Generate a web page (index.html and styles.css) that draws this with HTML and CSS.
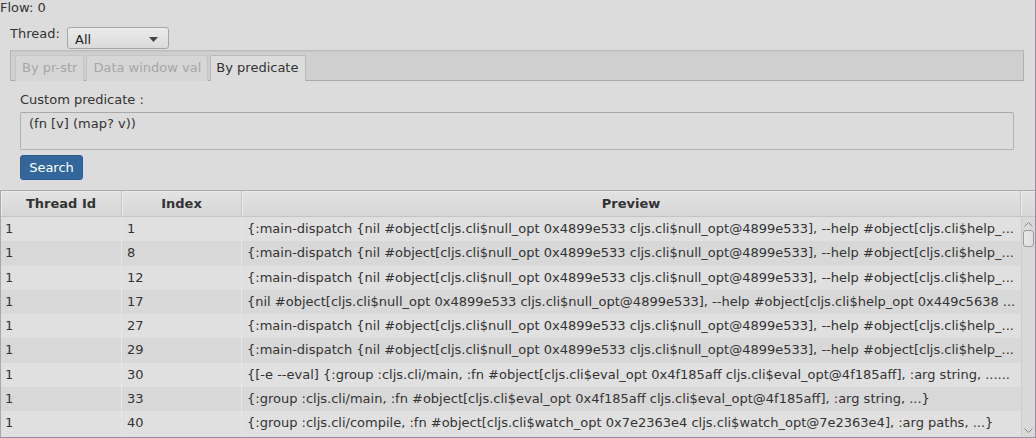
FILE: index.html
```html
<!DOCTYPE html>
<html>
<head>
<meta charset="utf-8">
<link rel="stylesheet" href="styles.css">
</head>
<body>
<div class="window">
  <div class="flow">Flow: 0</div>
  <div class="thread-row">
    <span class="thread-label">Thread:</span>
    <div class="combo">
      <span>All</span>
      <svg class="combo-arrow" width="9" height="5" viewBox="0 0 9 5"><path d="M0 0 H9 L4.5 5 Z" fill="#444"/></svg>
    </div>
  </div>
  <div class="tab-panel">
    <div class="tab-strip">
      <div class="tab">By pr-str</div>
      <div class="tab">Data window val</div>
      <div class="tab selected">By predicate</div>
    </div>
    <div class="tab-content">
      <div class="pred-label">Custom predicate :</div>
      <div class="textarea">(fn [v] (map? v))</div>
      <button class="search">Search</button>
    </div>
  </div>
  <div class="table">
    <div class="thead">
      <div class="th c1">Thread Id</div>
      <div class="th c2">Index</div>
      <div class="th c3">Preview</div>
      <div class="th corner"></div>
    </div>
    <div class="tbody">
      <div class="rows">
        <div class="row"><div class="td c1">1</div><div class="td c2">1</div><div class="td c3">{:main-dispatch {nil #object[cljs.cli$null_opt 0x4899e533 cljs.cli$null_opt@4899e533], --help #object[cljs.cli$help_...</div></div>
        <div class="row"><div class="td c1">1</div><div class="td c2">8</div><div class="td c3">{:main-dispatch {nil #object[cljs.cli$null_opt 0x4899e533 cljs.cli$null_opt@4899e533], --help #object[cljs.cli$help_...</div></div>
        <div class="row"><div class="td c1">1</div><div class="td c2">12</div><div class="td c3">{:main-dispatch {nil #object[cljs.cli$null_opt 0x4899e533 cljs.cli$null_opt@4899e533], --help #object[cljs.cli$help_...</div></div>
        <div class="row"><div class="td c1">1</div><div class="td c2">17</div><div class="td c3">{nil #object[cljs.cli$null_opt 0x4899e533 cljs.cli$null_opt@4899e533], --help #object[cljs.cli$help_opt 0x449c5638 ...</div></div>
        <div class="row"><div class="td c1">1</div><div class="td c2">27</div><div class="td c3">{:main-dispatch {nil #object[cljs.cli$null_opt 0x4899e533 cljs.cli$null_opt@4899e533], --help #object[cljs.cli$help_...</div></div>
        <div class="row"><div class="td c1">1</div><div class="td c2">29</div><div class="td c3">{:main-dispatch {nil #object[cljs.cli$null_opt 0x4899e533 cljs.cli$null_opt@4899e533], --help #object[cljs.cli$help_...</div></div>
        <div class="row"><div class="td c1">1</div><div class="td c2">30</div><div class="td c3">{[-e --eval] {:group :cljs.cli/main, :fn #object[cljs.cli$eval_opt 0x4f185aff cljs.cli$eval_opt@4f185aff], :arg string, ......</div></div>
        <div class="row"><div class="td c1">1</div><div class="td c2">33</div><div class="td c3">{:group :cljs.cli/main, :fn #object[cljs.cli$eval_opt 0x4f185aff cljs.cli$eval_opt@4f185aff], :arg string, ...}</div></div>
        <div class="row"><div class="td c1">1</div><div class="td c2">40</div><div class="td c3">{:group :cljs.cli/compile, :fn #object[cljs.cli$watch_opt 0x7e2363e4 cljs.cli$watch_opt@7e2363e4], :arg paths, ...}</div></div>
      </div>
      <div class="scrollbar">
        <svg class="sb-arrow" width="9" height="6" viewBox="0 0 9 6"><path d="M0.5 5.5 L4.5 1.5 L8.5 5.5" fill="none" stroke="#8a8a8a" stroke-width="1"/></svg>
        <div class="thumb"></div>
        <div class="sb-fill"></div>
        <svg class="sb-arrow" width="9" height="6" viewBox="0 0 9 6"><path d="M0.5 0.5 L4.5 4.5 L8.5 0.5" fill="none" stroke="#8a8a8a" stroke-width="1"/></svg>
      </div>
    </div>
  </div>
</div>
</body>
</html>
```
FILE: styles.css
```css
* { box-sizing: border-box; }
html, body { margin: 0; padding: 0; }
body {
  background: #dcdcdc;
  font-family: "DejaVu Sans", sans-serif;
  font-size: 13px;
  color: #333333;
  overflow: hidden;
}
.window {
  width: 1036px;
  height: 438px;
  border-right: 1px solid #9d8aa6;
  border-bottom: 1px solid #9d8aa6;
  display: flex;
  flex-direction: column;
  overflow: hidden;
}
.flow {
  line-height: 16px;
  height: 16px;
}
.thread-row {
  display: flex;
  align-items: flex-start;
  margin-top: 11px;
  padding-left: 10px;
  height: 23px;
}
.thread-label {
  line-height: 16px;
  margin-top: -1px;
  width: 57px;
}
.combo {
  width: 102px;
  height: 22px;
  border: 1px solid #a6a6a6;
  border-radius: 3px;
  background: linear-gradient(#ebebeb, #dadada);
  display: flex;
  align-items: center;
  justify-content: space-between;
  padding: 2px 10px 0 7px;
  color: #222;
}
.combo-arrow { margin-top: 0; }
.tab-panel {
  margin: 0 11px 0 10px;
}
.tab-strip {
  height: 31px;
  background: #cfcfcf;
  border: 1px solid #b3b3b3;
  border-top-color: #bcbcbc;
  border-bottom: 1px solid #a9a9a9;
  display: flex;
  align-items: flex-end;
  gap: 2px;
  padding-left: 4px;
  box-shadow: inset 0 1px 0 #c6c6c6;
}
.tab {
  height: 26px;
  margin-bottom: -1px;
  border: 1px solid #c4c4c4;
  border-bottom: none;
  border-radius: 2px 2px 0 0;
  background: #d6d6d6;
  color: #a6a6a6;
  padding: 4px 6px 0 6px;
  line-height: 16px;
  white-space: nowrap;
}
.tab.selected {
  background: #dcdcdc;
  color: #333333;
  border-color: #b9b9b9;
  padding: 4px 7px 0 5px;
}
.tab-content {
  padding: 11px 10px 0 10px;
}
.pred-label {
  line-height: 16px;
  height: 16px;
}
.textarea {
  margin-top: 4px;
  height: 38px;
  border: 1px solid #b2b2b2;
  border-top-color: #a8a8a8;
  border-radius: 2px;
  background: #dcdcdc;
  padding: 3px 8px;
  line-height: 16px;
  color: #333;
}
.search {
  display: block;
  margin-top: 5px;
  width: 63px;
  height: 25px;
  border: 1px solid #2d5d8f;
  border-radius: 3px;
  background: #33679b;
  color: #ffffff;
  font-family: "DejaVu Sans", sans-serif;
  font-size: 13px;
  padding: 0;
  line-height: 22px;
}
.table {
  margin-top: 10px;
  border-top: 1px solid #a9a9a9;
  border-left: 1px solid #a9a9a9;
  flex: 1;
  display: flex;
  flex-direction: column;
  min-height: 0;
}
.thead {
  display: flex;
  height: 26px;
  border-bottom: 1px solid #c4c4c4;
}
.th {
  background: linear-gradient(#e3e3e3, #d6d6d6);
  border-right: 1px solid #c6c6c6;
  box-shadow: inset 1px 1px 0 #ececec;
  font-weight: bold;
  text-align: center;
  line-height: 25px;
  color: #333;
}
.c1 { width: 121px; flex: none; }
.c2 { width: 120px; flex: none; }
.c3 { flex: 1; min-width: 0; }
.corner { width: 14px; flex: none; border-right: none; }
.tbody {
  flex: 1;
  display: flex;
  min-height: 0;
}
.rows {
  flex: 1;
  min-width: 0;
  overflow: hidden;
}
.row {
  display: flex;
  height: 24.3px;
  background: #e0e0e0;
}
.row:nth-child(even) { background: #d8d8d8; }
.td {
  padding-left: 4px;
  line-height: 24px;
  white-space: nowrap;
  overflow: hidden;
  border-right: 1px solid #e6e6e6;
  color: #333;
}
.td.c2 { padding-left: 5px; }
.td.c3 { padding-left: 5px; border-right: none; }
.scrollbar {
  width: 14px;
  flex: none;
  background: #d9d9d9;
  border-left: 1px solid #cdcdcd;
  display: flex;
  flex-direction: column;
  align-items: center;
  padding-top: 4px;
}
.sb-arrow { flex: none; }
.thumb {
  margin-top: 3px;
  width: 11px;
  height: 17px;
  border: 1px solid #9c9c9c;
  border-radius: 3px;
  background: linear-gradient(90deg, #e9e9e9, #dedede);
}
.sb-fill { flex: 1; }
.scrollbar .sb-arrow:last-child { margin-bottom: 3px; }
```
